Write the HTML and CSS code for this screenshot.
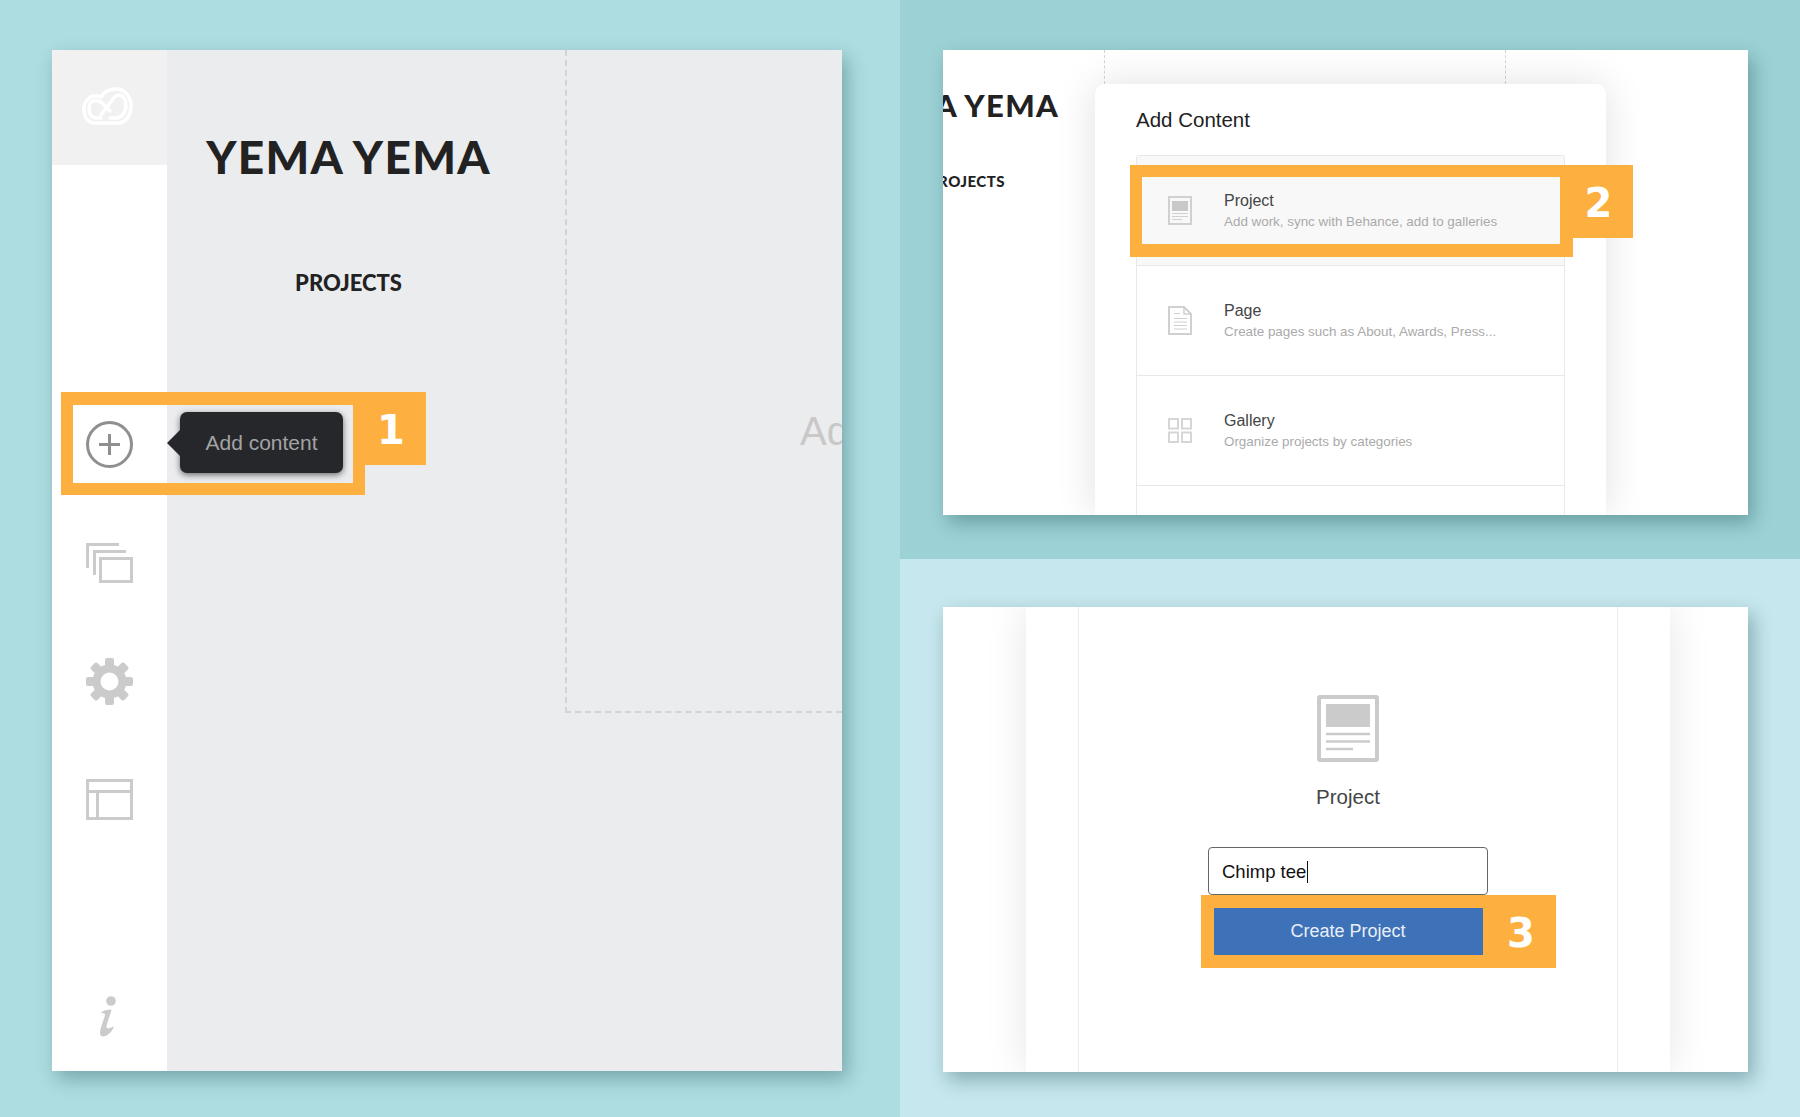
FILE: index.html
```html
<!DOCTYPE html>
<html lang="en">
<head>
  <meta charset="UTF-8" />
  <title>Add content steps</title>
  <link rel="stylesheet" href="styles.css">
</head>
<body>

  <section class="pane pane-left">
    <div class="window window-site">
      <aside class="sidebar">
        <div class="logo-cell">
          <svg class="logo" viewBox="0 0 51 38" fill="none" stroke="#fff" stroke-width="3.500" stroke-linecap="round">
            <path d="M12 36H36C44 36 49 28 49 19 49 9 42 2 34 2 27 2 22 5 19 10 17 9 15 9 13 9 7 9 2 15 2 22 2 30 6 36 12 36z"/>
            <path d="M28 24L20 16C18 14 15.500 13.500 13.500 13.500 9.500 13.500 7 17 7 22 7 27 10 31 14 31H19"/>
            <path d="M19 28L31 12C33 9.500 35 8 37 8 41 8 44 12 44 18 44 25 40 31 34 31H28"/>
          </svg>
        </div>
        <nav class="side-nav">
          <div class="nav-item">
            <svg class="nav-icon" width="47" height="47" viewBox="0 0 47 47" fill="none" stroke="#8f8f8f" stroke-width="3">
              <circle cx="23.500" cy="23.500" r="22"/>
              <path d="M13 23.500h21M23.500 13v21"/>
            </svg>
          </div>
          <div class="nav-item">
            <svg class="nav-icon" width="47" height="40" viewBox="0 0 47 40" fill="none" stroke="#cbcbcb" stroke-width="3">
              <rect x="14.500" y="15.500" width="31" height="23"/>
              <path d="M8.500 32V8.500H40"/>
              <path d="M1.500 25V1.500H33"/>
            </svg>
          </div>
          <div class="nav-item">
            <svg class="nav-icon" width="47" height="47" viewBox="0 0 47 47" fill="#cbcbcb">
              <circle cx="23.500" cy="23.500" r="13" fill="none" stroke="#cbcbcb" stroke-width="8"/>
              <rect x="19" y="0" width="9" height="10" rx="2"/>
              <rect x="19" y="0" width="9" height="10" rx="2" transform="rotate(45 23.500 23.500)"/>
              <rect x="19" y="0" width="9" height="10" rx="2" transform="rotate(90 23.500 23.500)"/>
              <rect x="19" y="0" width="9" height="10" rx="2" transform="rotate(135 23.500 23.500)"/>
              <rect x="19" y="0" width="9" height="10" rx="2" transform="rotate(180 23.500 23.500)"/>
              <rect x="19" y="0" width="9" height="10" rx="2" transform="rotate(225 23.500 23.500)"/>
              <rect x="19" y="0" width="9" height="10" rx="2" transform="rotate(270 23.500 23.500)"/>
              <rect x="19" y="0" width="9" height="10" rx="2" transform="rotate(315 23.500 23.500)"/>
            </svg>
          </div>
          <div class="nav-item">
            <svg class="nav-icon" width="47" height="41" viewBox="0 0 47 41" fill="none" stroke="#cbcbcb" stroke-width="3">
              <rect x="1.500" y="1.500" width="44" height="38"/>
              <path d="M1.500 12.500h44M11.500 12.500v27"/>
            </svg>
          </div>
          <div class="nav-item nav-info">
            <svg width="17" height="41" viewBox="0 0 17 41" fill="#cbcbcb">
              <circle cx="12" cy="5" r="4.800"/>
              <path d="M1.500 17C4 14.500 8 13.500 12.500 13.500 11.500 19 8 26 7.500 31 7.500 33 10 32.500 15 30.500 13 36 8 40.500 4 40.500 1 40.500 .5 37 1.500 33 3 27 5.500 22 6 19 6 17 3.500 17 1.500 17z"/>
            </svg>
          </div>
        </nav>
      </aside>

      <main class="site-main">
        <header class="masthead">
          <h1 class="site-title">YEMA YEMA</h1>
          <div class="site-link">PROJECTS</div>
        </header>
        <div class="dropzone">Add content</div>
      </main>

      <div class="tooltip">Add content</div>
      <div class="marker marker-one">
        <span class="marker-tab">1</span>
      </div>
    </div>
  </section>

  <div class="pane-stack">
    <section class="pane pane-top">
      <div class="window window-picker">
        <header class="masthead-crop">
          <h1 class="crop-title">YEMA YEMA</h1>
          <div class="crop-link">PROJECTS</div>
        </header>
        <span class="guide guide-a"></span>
        <span class="guide guide-b"></span>

        <div class="modal">
          <h2 class="modal-title">Add Content</h2>
          <ul class="type-list">
            <li class="type-row type-row-active">
              <svg width="24" height="29" viewBox="0 0 24 29" fill="none" stroke="#d0d0d0">
                <rect x="1" y="1" width="22" height="27" stroke-width="2"/>
                <rect x="4" y="5" width="16" height="10" fill="#c9c9c9" stroke="none"/>
                <path d="M4 17.500h16M4 20.500h16M4 23.500h10" stroke-width="1"/>
              </svg>
              <div class="type-text">
                <div class="type-name">Project</div>
                <div class="type-desc">Add work, sync with Behance, add to galleries</div>
              </div>
            </li>
            <li class="type-row">
              <svg width="24" height="29" viewBox="0 0 24 29" fill="none" stroke="#d0d0d0">
                <path d="M1 1h15l7 7v20H1z" stroke-width="2"/>
                <path d="M16 1v7h7" stroke-width="1.500"/>
                <path d="M6 7.500h6M6 12.500h13M6 16h13M6 19.500h13M6 23h13" stroke-width="1"/>
              </svg>
              <div class="type-text">
                <div class="type-name">Page</div>
                <div class="type-desc">Create pages such as About, Awards, Press...</div>
              </div>
            </li>
            <li class="type-row">
              <svg width="24" height="25" viewBox="0 0 24 25" fill="none" stroke="#d6d6d6" stroke-width="2">
                <rect x="1" y="1" width="9" height="9.500"/>
                <rect x="14" y="1" width="9" height="9.500"/>
                <rect x="1" y="14.500" width="9" height="9.500"/>
                <rect x="14" y="14.500" width="9" height="9.500"/>
              </svg>
              <div class="type-text">
                <div class="type-name">Gallery</div>
                <div class="type-desc">Organize projects by categories</div>
              </div>
            </li>
            <li class="type-row"></li>
          </ul>
        </div>

        <div class="marker marker-two">
          <span class="marker-tab">2</span>
        </div>
      </div>
    </section>

    <section class="pane pane-bottom">
      <div class="window window-create">
        <div class="modal-wide">
          <div class="sheet">
            <svg class="big-icon" width="62" height="67" viewBox="0 0 62 67" fill="none" stroke="#cbcbcb">
              <rect x="2" y="2" width="58" height="63" rx="1" stroke-width="4"/>
              <rect x="9" y="9" width="44" height="23" fill="#cbcbcb" stroke="none"/>
              <path d="M9 39h44M9 46.500h44M9 54h27" stroke-width="2.500"/>
            </svg>
            <div class="sheet-label">Project</div>
            <div class="name-field"><span class="name-value">Chimp tee</span></div>
            <div class="create-row">
              <button class="create-btn">Create Project</button>
              <span class="create-step">3</span>
            </div>
          </div>
        </div>
      </div>
    </section>
  </div>

</body>
</html>
```

FILE: styles.css
```css
* {
  box-sizing: border-box;
}
body {
  margin: 0;
  width: 1800px;
  height: 1117px;
  overflow: hidden;
  display: flex;
  font-family: "Liberation Sans", Arial, sans-serif;
  color: #222;
}
.pane-left {
  width: 900px;
  padding: 50px 58px 46px 52px;
  background: #aedde1;
}
.pane-stack {
  width: 900px;
  display: flex;
  flex-direction: column;
}
.pane-top {
  height: 559px;
  padding: 50px 52px 44px 43px;
  background: #9cd2d6;
}
.pane-bottom {
  height: 558px;
  padding: 48px 52px 45px 43px;
  background: #c5e7ed;
}
.window {
  position: relative;
  height: 100%;
  background: #fff;
  box-shadow: 5px 8px 18px rgba(0, 50, 60, 0.32);
}
.window-site {
  display: flex;
}

/* sidebar */
.sidebar {
  width: 115px;
  display: flex;
  flex-direction: column;
  background: #fff;
}
.logo-cell {
  height: 115px;
  background: #f1f1f1;
  padding: 37px 0 0 30px;
}
.logo {
  display: block;
  width: 51px;
  height: 38px;
}
.side-nav {
  flex: 1;
  display: flex;
  flex-direction: column;
  padding-top: 220px;
}
.nav-item {
  height: 118.500px;
  display: flex;
  align-items: center;
  padding-left: 34px;
}
.nav-info {
  margin-top: auto;
  height: auto;
  padding: 0 0 34px 47px;
}

/* site behind */
.site-main {
  flex: 1;
  display: flex;
  align-items: flex-start;
  min-width: 0;
  height: 100%;
  overflow: hidden;
  background: #ebecee;
}
.masthead {
  width: 398px;
  flex: none;
  padding: 79px 35px 0 0;
  text-align: center;
}
.site-title {
  margin: 0;
  font-family: Lato, sans-serif;
  font-weight: 900;
  font-size: 46px;
  line-height: 56px;
  letter-spacing: 1.300px;
  color: #222;
}
.site-link {
  margin-top: 85px;
  font-family: Lato, sans-serif;
  font-weight: 900;
  font-size: 22px;
  line-height: 26px;
  color: #222;
}
.dropzone {
  flex: 1;
  height: 663px;
  padding: 358px 0 0 233px;
  overflow: hidden;
  white-space: nowrap;
  border-left: 2px dashed #d3d3d3;
  border-bottom: 2px dashed #d3d3d3;
  font-size: 40px;
  line-height: 46px;
  color: #c8c8c8;
}
.tooltip {
  position: absolute;
  left: 128px;
  top: 362px;
  width: 163px;
  height: 61px;
  display: flex;
  align-items: center;
  justify-content: center;
  background: #26272b;
  border-radius: 7px;
  box-shadow: 0 2px 6px rgba(0, 0, 0, 0.55);
  font-size: 21px;
  color: #a3a3a3;
}
.tooltip::before {
  content: "";
  position: absolute;
  left: -13px;
  top: 18px;
  border-style: solid;
  border-width: 13px 13px 13px 0;
  border-color: transparent #26272b transparent transparent;
}

/* orange step markers */
.marker {
  position: absolute;
  border-style: solid;
  border-color: #fdb040;
}
.marker-tab {
  position: absolute;
  display: flex;
  align-items: center;
  justify-content: center;
  padding: 2px 9px 0 0;
  background: #fdb040;
  font-family: "DejaVu Sans", sans-serif;
  font-weight: 700;
  font-size: 40px;
  color: #fff;
}
.marker-one {
  left: 9px;
  top: 342px;
  width: 304px;
  height: 103px;
  border-width: 13px 12px 12px;
}
.marker-one .marker-tab {
  top: -13px;
  right: -73px;
  width: 61px;
  height: 73px;
}
.marker-two {
  left: 187px;
  top: 115px;
  width: 443px;
  height: 92px;
  border-width: 12px 13px 13px 12px;
}
.marker-two .marker-tab {
  top: -12px;
  right: -73px;
  width: 60px;
  height: 73px;
}

/* second panel */
.masthead-crop {
  width: 116px;
  padding-top: 36px;
  overflow: hidden;
}
.crop-title {
  margin: 0;
  display: flex;
  justify-content: flex-end;
  white-space: nowrap;
  font-family: Lato, sans-serif;
  font-weight: 900;
  font-size: 31px;
  line-height: 38px;
  letter-spacing: 1.300px;
  color: #222;
}
.crop-link {
  margin-top: 48px;
  padding-right: 54px;
  display: flex;
  justify-content: flex-end;
  white-space: nowrap;
  font-family: Lato, sans-serif;
  font-weight: 900;
  font-size: 15px;
  line-height: 18px;
  letter-spacing: 0.500px;
  color: #222;
}
.guide {
  position: absolute;
  top: 0;
  height: 34px;
  border-left: 1px dashed #d4d4d4;
}
.guide-a {
  left: 161px;
}
.guide-b {
  left: 562px;
}
.modal {
  position: absolute;
  left: 152px;
  top: 34px;
  width: 511px;
  height: 431px;
  padding: 22px 41px 0;
  overflow: hidden;
  background: #fff;
  border-radius: 10px 10px 0 0;
  box-shadow: 0 0 40px rgba(0, 0, 0, 0.12);
  clip-path: inset(-40px -40px 0 -40px);
}
.modal-title {
  margin: 0;
  font-weight: 400;
  font-size: 20.500px;
  line-height: 28px;
  color: #222;
}
.type-list {
  margin: 21px 0 0;
  padding: 0;
  list-style: none;
  border: 1px solid #e8e8e8;
  border-bottom: 0;
  border-radius: 3px 3px 0 0;
}
.type-row {
  height: 110px;
  display: flex;
  align-items: center;
  gap: 32px;
  padding-left: 31px;
  border-bottom: 1px solid #e8e8e8;
}
.type-row-active {
  background: #f8f8f8;
}
.type-name {
  font-size: 16px;
  line-height: 20px;
  color: #444;
}
.type-desc {
  margin-top: 2px;
  font-size: 13.400px;
  line-height: 18px;
  color: #aaa;
}

/* third panel */
.modal-wide {
  margin-left: 83px;
  width: 644px;
  height: 100%;
  padding: 0 52px;
  background: #fff;
  box-shadow: 0 0 40px rgba(0, 0, 0, 0.1);
  clip-path: inset(0 -60px 0 -60px);
}
.sheet {
  height: 100%;
  display: flex;
  flex-direction: column;
  align-items: center;
  padding-top: 88px;
  border-left: 1px solid #ececec;
  border-right: 1px solid #ececec;
}
.big-icon {
  display: block;
}
.sheet-label {
  margin-top: 23px;
  font-size: 20.500px;
  line-height: 24px;
  color: #444;
}
.name-field {
  margin-top: 38px;
  width: 280px;
  height: 48px;
  display: flex;
  align-items: center;
  padding: 2px 0 0 13px;
  background: #fff;
  border: 1.500px solid #666;
  border-radius: 4px;
  font-size: 18.500px;
  color: #111;
}
.name-value {
  padding-right: 1px;
  border-right: 1px solid #111;
  line-height: 22px;
}
.create-row {
  margin-left: 60px;
  width: 355px;
  height: 73px;
  display: flex;
  align-items: center;
  padding: 13px 0 13px 13px;
  background: #fdb040;
}
.create-btn {
  width: 269px;
  height: 47px;
  border: 0;
  background: #3d72b8;
  font-family: inherit;
  font-size: 18px;
  color: #e9eff7;
}
.create-step {
  flex: 1;
  padding: 3px 0 0 4px;
  text-align: center;
  font-family: "DejaVu Sans", sans-serif;
  font-weight: 700;
  font-size: 40px;
  line-height: 47px;
  color: #fff;
}
```
